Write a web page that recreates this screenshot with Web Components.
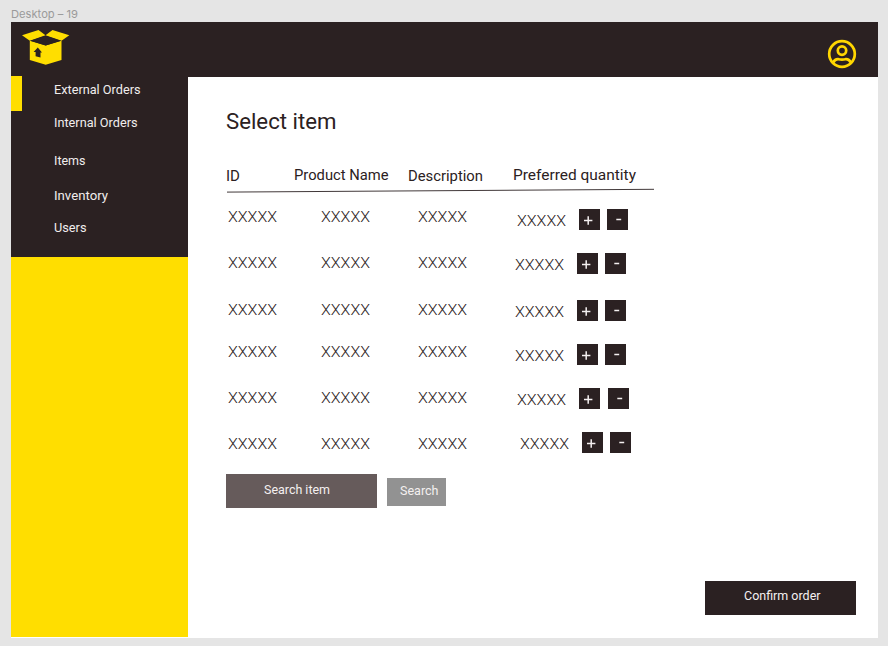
<!DOCTYPE html>
<html lang="en"><head><meta charset="utf-8"><title>Select item</title>
<style>
html,body{margin:0;height:100%;overflow:hidden;background:#e5e5e5}
body{font-family:Roboto,"Liberation Sans",sans-serif;color:#2b2122}
</style></head><body>
<order-app></order-app>
<script>
const define=(name,html,after)=>customElements.define(name,class extends HTMLElement{
  connectedCallback(){
    if(this.shadowRoot)return;
    const t=document.createElement('template');t.innerHTML=html;
    this.attachShadow({mode:'open'}).append(t.content.cloneNode(true));
    if(after)after(this,this.shadowRoot);
  }
});

/* A one-line label stretched to a given width. */
define('fit-text',`<style>:host{display:block;white-space:nowrap;line-height:20px;height:20px;font-size:14.3px}span{display:inline-block;transform-origin:0 50%}</style><span><slot></slot></span>`,(el,r)=>{
  const s=r.querySelector('span'),w=+el.getAttribute('w'),size=el.getAttribute('size');
  if(size)el.style.fontSize=size+'px';
  el.style.width=w+'px';
  s.style.transform='scaleX('+(w+.5)/s.getBoundingClientRect().width+')';
});

define('box-logo',`<style>:host{display:block;width:48px;height:36px}svg{display:block}</style>
<svg width="48" height="36" viewBox="0 0 48 36"><g fill="#ffde00"><path d="M0 5.3 16.5 0 23.5 5.2 7.8 10.8Z"/><path d="M23.5 5.2 30.5 0 47.3 5.3 39.5 10.8Z"/><path d="M7.8 10.8 23.7 15.5 39.5 10.8V30L23.7 34.8 7.8 30Z"/></g><path fill="#2b2122" d="M23.6 5.7 8.4 10.7 23.7 15.4 38.9 10.7ZM15.8 17.6 20 22.6 18.5 22.5V27.4L13.6 26.3V22.1L11.6 22Z"/></svg>`);

define('user-icon',`<style>:host{display:block;width:30px;height:30px}svg{display:block}</style>
<svg width="30" height="30" viewBox="0 0 30 30" fill="none" stroke="#ffd600" stroke-width="2.7"><circle cx="15" cy="15" r="12.8"/><circle cx="15" cy="11.6" r="4.2"/><path d="M6.3 23.5C7.5 20.8 9.5 20 11.5 20.2C14 20.7 16 20.7 18.5 20.2C20.5 20 22.5 20.8 23.7 23.5"/></svg>`);

define('top-bar',`<style>:host{display:flex;justify-content:space-between;box-sizing:border-box;height:54.5px;padding:8px 21px 0 10.5px;background:#2b2122}user-icon{margin-top:9px}</style>
<box-logo></box-logo><user-icon></user-icon>`);

define('side-nav',`<style>
:host{display:block;width:177px;height:561px;margin-top:-.5px;background:#ffde00}
nav{height:181px;background:#2b2122;display:grid;grid-template-columns:10.5px 1fr;column-gap:32.2px}
i{background:#ffde00;height:35px}
div{display:flex;flex-direction:column;padding-top:3.5px;color:#f1eded}
</style><nav><i></i><div>
<fit-text size="12.6" w="86">External Orders</fit-text>
<fit-text size="12.6" w="83" style="margin-top:13px">Internal Orders</fit-text>
<fit-text size="12.6" w="31" style="margin-top:18px">Items</fit-text>
<fit-text size="12.6" w="53.5" style="margin-top:15px">Inventory</fit-text>
<fit-text size="12.6" w="32" style="margin-top:12px">Users</fit-text>
</div></nav>`);

define('step-button',`<style>:host{display:flex;justify-content:center;box-sizing:border-box;width:21px;height:21px;background:#2b2122}
svg{display:block}</style><svg width="21" height="21" stroke="#f4f0f0" stroke-width="1.5"><path/></svg>`,(el,r)=>{
  r.querySelector('path').setAttribute('d',el.getAttribute('kind')==='plus'?'M5 11.5H13.4M9.2 7.2V15.8':'M9.3 10.5H14.2');
});

/* dx / dy nudge the quantity group; its value sits slightly below the buttons' top. */
define('item-row',`<style>
:host{display:grid;grid-template-columns:93px 97px 97px 1fr;align-items:start;padding-left:2px;font-weight:300}
.q{display:grid;grid-template-columns:62px 21px 28.5px}
step-button+step-button{margin-left:7.5px}
</style>
<fit-text w="48.5">XXXXX</fit-text><fit-text w="48.5">XXXXX</fit-text><fit-text w="48.5">XXXXX</fit-text>
<div class="q"><fit-text w="48.5">XXXXX</fit-text><step-button kind="plus"></step-button><step-button kind="minus"></step-button></div>`,(el,r)=>{
  const g=k=>+el.getAttribute(k);
  el.style.height=g('h')+'px';
  const q=r.querySelector('.q');
  q.style.marginLeft=g('dx')+'px';q.style.marginTop=g('dy')+'px';
  q.firstElementChild.style.marginTop=g('ty')+'px';
});

define('item-table',`<style>
:host{display:block;width:430px}
header{display:grid;grid-template-columns:68px 114px 104.5px 1fr;height:23px}
svg{display:block;height:7px;width:430px}
main{padding-top:12px;height:252.5px}
</style>
<header><fit-text w="13.5" style="margin-top:1.5px">ID</fit-text><fit-text w="94">Product Name</fit-text><fit-text w="74.5" style="margin-top:1.5px">Description</fit-text><fit-text w="122.5">Preferred quantity</fit-text></header>
<svg viewBox="0 0 430 7"><path d="M1 4.1 428 1.3" stroke="#2b2122" stroke-width=".9"/></svg>
<main>
<item-row h="46.5" dx="1.5" dy="2.5" ty="2"></item-row>
<item-row h="46.5" dx="-.5" dy="-.5" ty="2"></item-row>
<item-row h="42" dx="-.5" dy=".5" ty="2"></item-row>
<item-row h="46.5" dx="-.5" dy="2.5" ty="2"></item-row>
<item-row h="46" dx="2.3" dy="0" ty="2"></item-row>
<item-row h="26" dx="4.7" dy="-2" ty="2"></item-row>
</main>`);

define('flat-button',`<style>:host{display:block;box-sizing:border-box;background:#2b2122;color:#f4f0f0}</style><slot></slot>`);

define('item-page',`<style>
:host{display:flex;flex-direction:column;flex:1;padding:35px 22px 22.8px 37.8px;box-sizing:border-box;height:561px}
.s{display:flex;align-items:start;gap:9.5px;margin-top:15px}
.a{width:151px;height:34.4px;padding:5.5px 0 0 38px;background:#665b5b}
.b{width:59px;height:28px;padding:3.5px 0 0 13px;margin-top:3.5px;background:#929292}
.c{width:151px;height:34px;padding:5.5px 0 0 39px;margin:auto 0 0 auto}
</style>
<fit-text size="21.5" w="110">Select item</fit-text>
<item-table style="margin-top:33px"></item-table>
<div class="s"><flat-button class="a"><fit-text size="12.4" w="65.5">Search item</fit-text></flat-button>
<flat-button class="b"><fit-text size="12.4" w="38">Search</fit-text></flat-button></div>
<flat-button class="c"><fit-text size="12.4" w="76">Confirm order</fit-text></flat-button>`);

define('order-app',`<style>
:host{display:block;box-sizing:border-box;width:888px;height:646px;padding:4px 10.3px 8px 11.3px;background:#e5e5e5}
.t{color:#9a9a9a;font-family:Inter,sans-serif;height:18px}
.f{background:#fff;height:616px}
.r{display:flex}
</style>
<fit-text class="t" size="11" w="66.5">Desktop – 19</fit-text>
<div class="f"><top-bar></top-bar><div class="r"><side-nav></side-nav><item-page></item-page></div></div>`);
</script></body></html>
